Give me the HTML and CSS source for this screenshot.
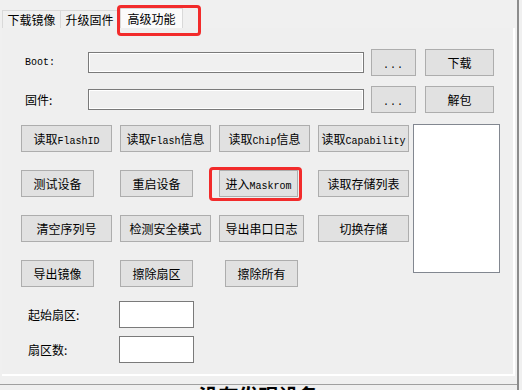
FILE: index.html
```html
<!DOCTYPE html>
<html lang="zh-CN">
<head>
    <meta charset="UTF-8">
    <title>高级功能</title>
    <link rel="stylesheet" href="styles.css">
</head>
<body>
    <div class="window">
        <div class="tabs">
            <div class="tab">下载镜像</div>
            <div class="tab">升级固件</div>
            <div class="tab active">高级功能</div>
        </div>
        <div class="panel">
            <div class="file-row">
                <span class="label lat">Boot:</span>
                <div class="path"></div>
                <button class="btn browse"><span class="lat dots">...</span></button>
                <button class="btn action">下载</button>
            </div>
            <div class="file-row">
                <span class="label">固件:</span>
                <div class="path"></div>
                <button class="btn browse"><span class="lat dots">...</span></button>
                <button class="btn action">解包</button>
            </div>
            <div class="main">
                <div class="grid">
                    <button class="btn w91">读取<span class="lat">FlashID</span></button>
                    <button class="btn w91">读取<span class="lat">Flash</span>信息</button>
                    <button class="btn w91">读取<span class="lat">Chip</span>信息</button>
                    <button class="btn w91">读取<span class="lat">Capability</span></button>

                    <button class="btn w73">测试设备</button>
                    <button class="btn w73">重启设备</button>
                    <button class="btn w79">进入<span class="lat">Maskrom</span></button>
                    <button class="btn w91">读取存储列表</button>

                    <button class="btn w91">清空序列号</button>
                    <button class="btn w91">检测安全模式</button>
                    <button class="btn w85">导出串口日志</button>
                    <button class="btn w91">切换存储</button>

                    <button class="btn w73">导出镜像</button>
                    <button class="btn w73">擦除扇区</button>
                    <button class="btn w73 shift">擦除所有</button>
                </div>
                <div class="listbox"></div>
            </div>
            <div class="sector-row">
                <span class="sector-label">起始扇区:</span>
                <div class="field"></div>
            </div>
            <div class="sector-row">
                <span class="sector-label">扇区数:</span>
                <div class="field"></div>
            </div>
        </div>
        <div class="status">没有发现设备</div>

        <div class="mark mark-tab"></div>
        <div class="mark mark-maskrom"></div>
    </div>
</body>
</html>
```

FILE: styles.css
```css
* {
    box-sizing: border-box;
}
body {
    margin: 0;
    background: #f0f0f0;
    font-family: "Noto Sans CJK SC", sans-serif;
    font-size: 12px;
    color: #000;
    overflow: hidden;
}
.window {
    position: relative;
    width: 519px;
    height: 390px;
    border-right: 2px solid #8c8c8c;
    overflow: hidden;
}
.lat {
    font-family: "Liberation Mono", monospace;
    font-size: 10px;
}
.dots {
    letter-spacing: 1px;
}

/* tabs */
.tabs {
    display: flex;
    align-items: flex-end;
    height: 28px;
    padding-left: 2px;
}
.tab {
    width: 59px;
    height: 18px;
    line-height: 17px;
    text-align: center;
    border: 1px solid #d9d9d9;
    border-bottom: none;
    background: #f0f0f0;
}
.tab + .tab {
    margin-left: -1px;
}
.tab.active {
    width: 63px;
    height: 20px;
    line-height: 20px;
    margin-left: 1px;
    background: #fbfbfb;
}

/* page */
.panel {
    margin-left: 2px;
    width: 513px;
    height: 348px;
    padding-top: 21px;
    background: #efefef;
    border-right: 2px solid #fff;
    border-bottom: 2px solid #fff;
}
.file-row {
    display: flex;
    align-items: center;
    height: 27px;
}
.file-row + .file-row {
    margin-top: 10px;
}
.label {
    width: 86px;
    padding-left: 23px;
}
.path {
    width: 276px;
    height: 21px;
    border: 1px solid #7a7a7a;
    background: #f0f0f0;
    box-shadow: inset 0 0 0 1px #fff;
}
.btn {
    height: 27px;
    padding: 0;
    background: #e1e1e1;
    border: 1px solid #adadad;
    font-family: inherit;
    font-size: 12px;
    color: #000;
    white-space: nowrap;
}
.browse {
    width: 45px;
    margin-left: 7px;
}
.action {
    width: 69px;
    margin-left: 9px;
}

.main {
    display: flex;
    align-items: flex-start;
    margin-top: 11px;
    padding-left: 19px;
}
.grid {
    display: grid;
    grid-template-columns: 99px 99px 99px 91px;
    row-gap: 18px;
    padding-top: 1px;
}
.w91 { width: 91px; }
.w85 { width: 85px; }
.w79 { width: 79px; }
.w73 { width: 73px; }
.shift { margin-left: 6px; }
.listbox {
    width: 87px;
    height: 149px;
    margin-left: 4px;
    background: #fff;
    border: 1px solid #828790;
}

.sector-row {
    display: flex;
    align-items: center;
    height: 27px;
    margin-top: 14px;
}
.sector-row + .sector-row {
    margin-top: 8px;
}
.sector-label {
    width: 117px;
    padding-left: 26px;
}
.field {
    width: 75px;
    height: 27px;
    background: #fff;
    border: 1px solid #7a7a7a;
}

.status {
    margin-top: 8px;
    border-top: 1px solid #a0a0a0;
    text-align: center;
    font-size: 20px;
    font-weight: bold;
    line-height: 22px;
}

/* red highlight boxes */
.mark {
    position: absolute;
    border: 3px solid #f22b2b;
    border-radius: 4px;
}
.mark-tab {
    left: 117px;
    top: 5px;
    width: 84px;
    height: 31px;
}
.mark-maskrom {
    left: 209px;
    top: 167px;
    width: 93px;
    height: 34px;
}
```
